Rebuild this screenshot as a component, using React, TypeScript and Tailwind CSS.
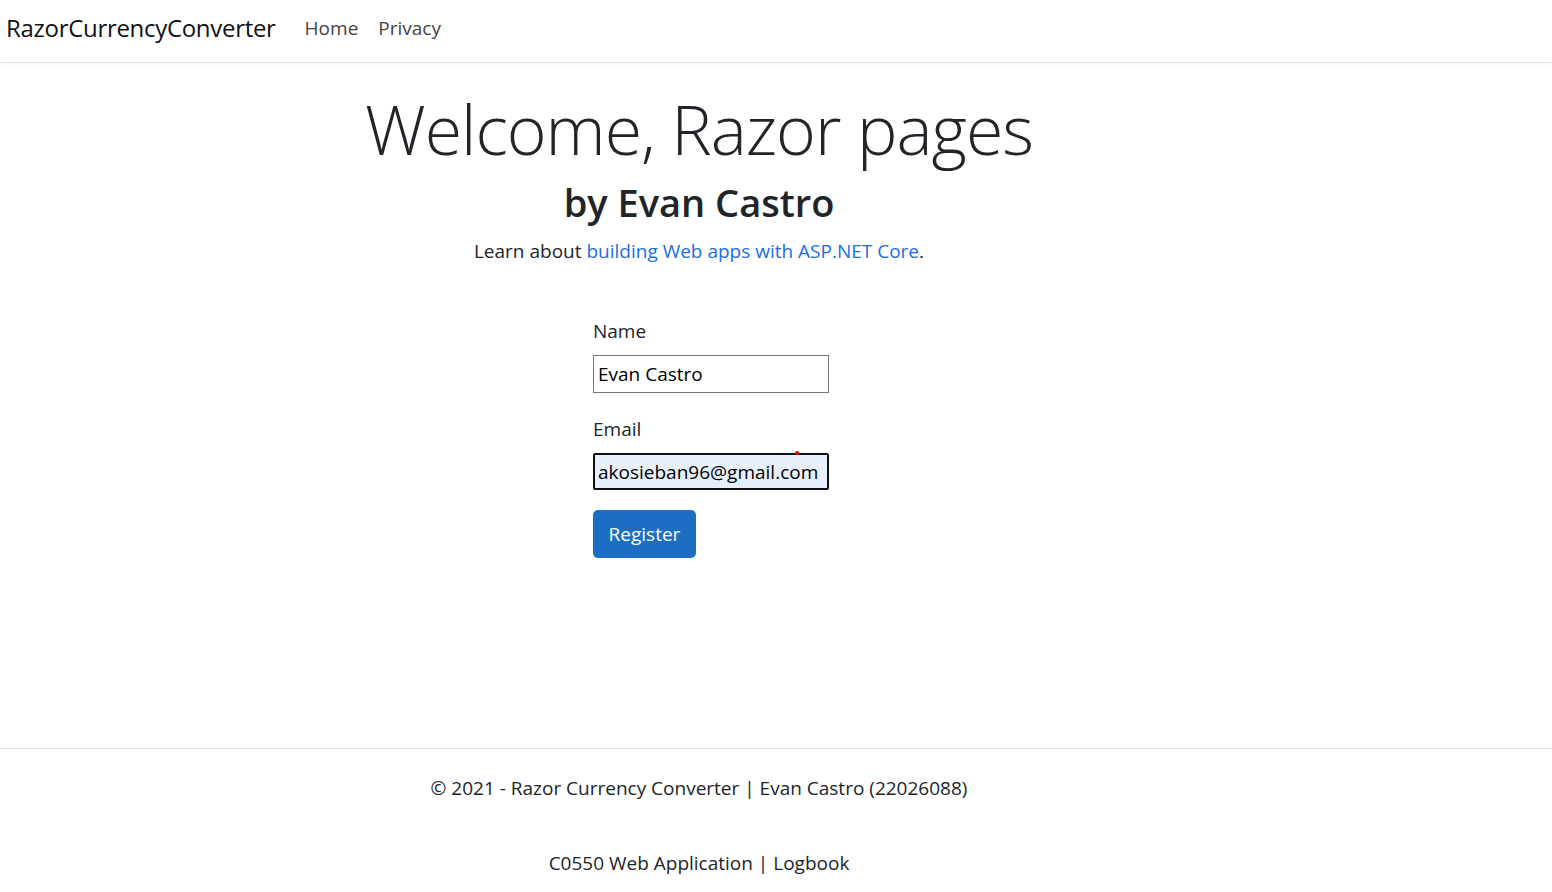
export default function App() {
  return (
    <div className="min-h-[892px] bg-white font-['Open_Sans','Noto_Sans',sans-serif] text-[#212529] flex flex-col">
      {/* Navbar */}
      <header className="h-[63px] pb-[6px] border-b border-[#e5e5e5] shadow-[0_1px_3px_rgba(0,0,0,0.05)] flex items-center">
        <span className="ml-[6px] text-[24px] tracking-[-0.3px] text-[#111]">RazorCurrencyConverter</span>
        <nav className="ml-[29px] flex gap-[20px] text-[19px] text-[#444]">
          <a>Home</a>
          <a>Privacy</a>
        </nav>
      </header>

      {/* Main */}
      <main className="w-[1398px] flex flex-col items-center text-center">
        <h1 className="mt-[24px] text-[68px] font-light leading-[84px] tracking-[-1px]">Welcome, Razor pages</h1>
        <h2 className="mt-[7px] text-[38px] font-semibold leading-[48px]">by Evan Castro</h2>
        <p className="mt-[10px] text-[19px] leading-[30px]">
          Learn about <a className="text-[#1b6ee0]">building Web apps with ASP.NET Core</a>.
        </p>
      </main>

      <form className="ml-[593px] mt-[50px] flex flex-col items-start text-[19px]">
        <label className="leading-[30px]">Name</label>
        <input
          defaultValue="Evan Castro"
          className="mt-[9px] w-[236px] h-[38px] border border-[#767676] px-[4px] text-[19px] text-black outline-none"
        />
        <label className="mt-[21px] leading-[30px]">Email</label>
        <div className="relative mt-[9px]">
          <input
            defaultValue="akosieban96@gmail.com"
            className="w-[236px] h-[37px] border-2 border-[#101010] rounded-[2px] bg-[#e8f0fe] px-[3px] text-[19px] text-black outline-none"
          />
          <span className="absolute left-[202px] top-[-2px] w-[4px] h-[4px] rounded-full bg-[#e00]" />
        </div>
        <button
          type="button"
          className="mt-[20px] w-[103px] h-[48px] rounded-[5px] bg-[#1b6ec2] text-white text-[19px]"
        >
          Register
        </button>
      </form>

      {/* Footer */}
      <footer className="mt-[190px] border-t border-[#dee2e6] flex flex-col">
        <div className="w-[1398px] text-center text-[19px] leading-[30px]">
          <p className="mt-[24px]">© 2021 - Razor Currency Converter | Evan Castro (22026088)</p>
          <p className="mt-[45px]">C0550 Web Application | Logbook</p>
        </div>
      </footer>
    </div>
  )
}
